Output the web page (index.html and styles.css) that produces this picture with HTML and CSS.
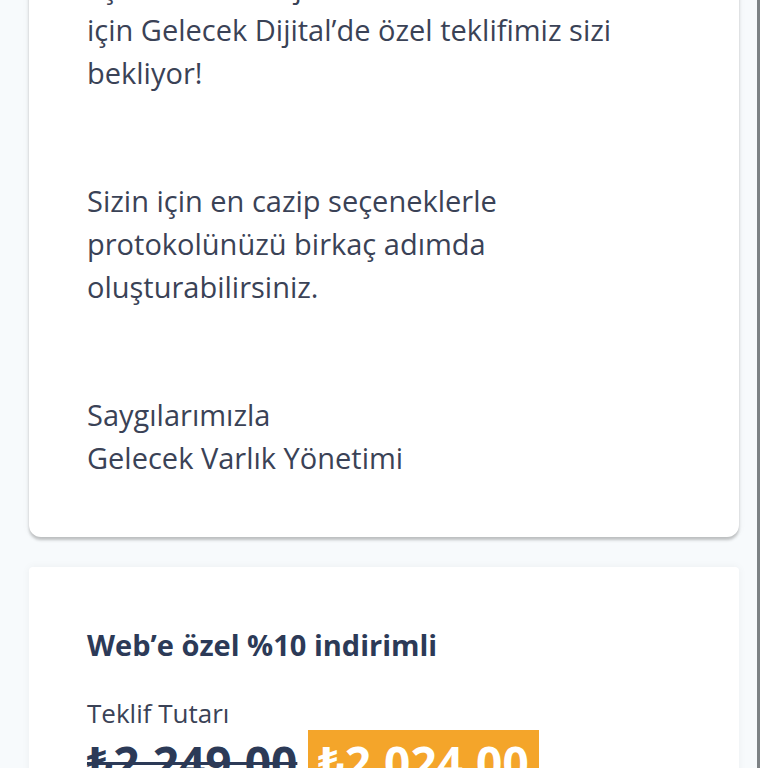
FILE: index.html
```html
<!DOCTYPE html>
<html lang="tr">
<head>
    <meta charset="UTF-8">
    <meta name="viewport" content="width=device-width, initial-scale=1.0">
    <title>Gelecek Dijital - Özel Teklif</title>
    <link rel="stylesheet" href="styles.css">
</head>
<body>
    <div class="frame">
        <main class="page">
            <section class="card letter">
                <p>Eşsiz bir avantajla birikimleriniz<br>
                için Gelecek Dijital’de özel teklifimiz sizi bekliyor!</p>

                <p>Sizin için en cazip seçeneklerle protokolünüzü birkaç adımda oluşturabilirsiniz.</p>

                <p>Saygılarımızla<br>Gelecek Varlık Yönetimi</p>
            </section>

            <section class="card offer">
                <h2 class="offer-title">Web’e özel %10 indirimli</h2>
                <div class="offer-label">Teklif Tutarı</div>
                <div class="price-row">
                    <span class="price-old">₺2.249,00</span>
                    <span class="price-new">₺2.024,00</span>
                </div>
            </section>
        </main>
        <div class="edge"></div>
    </div>
</body>
</html>
```

FILE: styles.css
```css
* {
    margin: 0;
    padding: 0;
    box-sizing: border-box;
}

body {
    font-family: 'Open Sans', 'Noto Sans', sans-serif;
    background: #ffffff;
    color: #3a4256;
    height: 100vh;
    overflow: hidden;
}

.frame {
    display: flex;
    height: 100%;
}

.page {
    flex: 1;
    background: #f7fafc;
    padding: 0 18px 0 29px;
    margin-top: -93px;
    display: flex;
    flex-direction: column;
    gap: 30px;
}

.edge {
    width: 3px;
    margin-right: 8px;
    background: #7d8285;
}

.card {
    background: #ffffff;
    border-radius: 12px;
    padding: 58px;
    box-shadow: 0 3px 3px rgba(0, 0, 0, 0.22), 0 0 8px rgba(0, 0, 0, 0.05);
}

.letter p {
    font-size: 29px;
    line-height: 43px;
    margin-bottom: 85px;
}

.letter p:last-child {
    margin-bottom: 0;
}

.offer {
    border-radius: 4px;
    box-shadow: 0 0 8px rgba(0, 0, 0, 0.05);
}

.offer-title {
    font-size: 29px;
    font-weight: 700;
    line-height: 40px;
    color: #2c3a57;
    margin-bottom: 31px;
}

.offer-label {
    font-size: 26px;
    line-height: 34px;
    color: #3a4256;
}

.price-row {
    display: flex;
    align-items: flex-start;
    gap: 11px;
}

.price-old {
    font-size: 46px;
    font-weight: 700;
    line-height: 64px;
    color: #2c3a57;
    text-decoration: line-through;
    text-decoration-thickness: 3px;
}

.price-new {
    font-size: 46px;
    font-weight: 700;
    line-height: 64px;
    color: #ffffff;
    background: #f4a52a;
    padding: 0 10px;
}
```
